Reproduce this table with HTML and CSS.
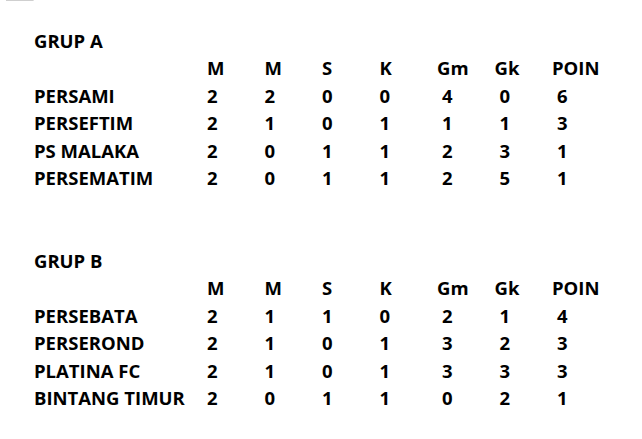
FILE: index.html
```html
<!DOCTYPE html>
<html lang="id">
<head>
<meta charset="utf-8">
<title>Klasemen Grup</title>
<link rel="stylesheet" href="styles.css">
</head>
<body>
<div class="edge"></div>
<main class="sheet">
  <section class="group">
    <div class="title">GRUP A</div>
    <div class="row head"><span></span><span>M</span><span>M</span><span>S</span><span>K</span><span>Gm</span><span>Gk</span><span>POIN</span></div>
    <div class="row"><span>PERSAMI</span><span>2</span><span>2</span><span>0</span><span>0</span><span class="ind">4</span><span class="ind">0</span><span class="ind">6</span></div>
    <div class="row"><span>PERSEFTIM</span><span>2</span><span>1</span><span>0</span><span>1</span><span class="ind">1</span><span class="ind">1</span><span class="ind">3</span></div>
    <div class="row"><span>PS MALAKA</span><span>2</span><span>0</span><span>1</span><span>1</span><span class="ind">2</span><span class="ind">3</span><span class="ind">1</span></div>
    <div class="row"><span>PERSEMATIM</span><span>2</span><span>0</span><span>1</span><span>1</span><span class="ind">2</span><span class="ind">5</span><span class="ind">1</span></div>
  </section>
  <section class="group">
    <div class="title">GRUP B</div>
    <div class="row head"><span></span><span>M</span><span>M</span><span>S</span><span>K</span><span>Gm</span><span>Gk</span><span>POIN</span></div>
    <div class="row"><span>PERSEBATA</span><span>2</span><span>1</span><span>1</span><span>0</span><span class="ind">2</span><span class="ind">1</span><span class="ind">4</span></div>
    <div class="row"><span>PERSEROND</span><span>2</span><span>1</span><span>0</span><span>1</span><span class="ind">3</span><span class="ind">2</span><span class="ind">3</span></div>
    <div class="row"><span>PLATINA FC</span><span>2</span><span>1</span><span>0</span><span>1</span><span class="ind">3</span><span class="ind">3</span><span class="ind">3</span></div>
    <div class="row"><span>BINTANG TIMUR</span><span>2</span><span>0</span><span>1</span><span>1</span><span class="ind">0</span><span class="ind">2</span><span class="ind">1</span></div>
  </section>
</main>
</body>
</html>
```
FILE: styles.css
```css
html, body {
  margin: 0;
  padding: 0;
  background: #ffffff;
}
body {
  font-family: "Open Sans", Lato, "Liberation Sans", sans-serif;
  font-weight: 700;
  font-size: 18.5px;
  color: #000000;
  line-height: 27.5px;
}
.edge {
  width: 27px;
  height: 1px;
  margin-left: 6px;
  background: #cfcfcf;
  border-right: 1px solid #e2e2e2;
}
.sheet {
  padding: 25.5px 0 0 34px;
}
.group {
  margin-bottom: 55px;
}
.group:last-child {
  margin-bottom: 0;
}
.title,
.row {
  height: 27.5px;
  white-space: nowrap;
}
.row {
  display: grid;
  grid-template-columns: 173px repeat(7, 57.5px);
}
.ind {
  padding-left: 5px;
}
```
